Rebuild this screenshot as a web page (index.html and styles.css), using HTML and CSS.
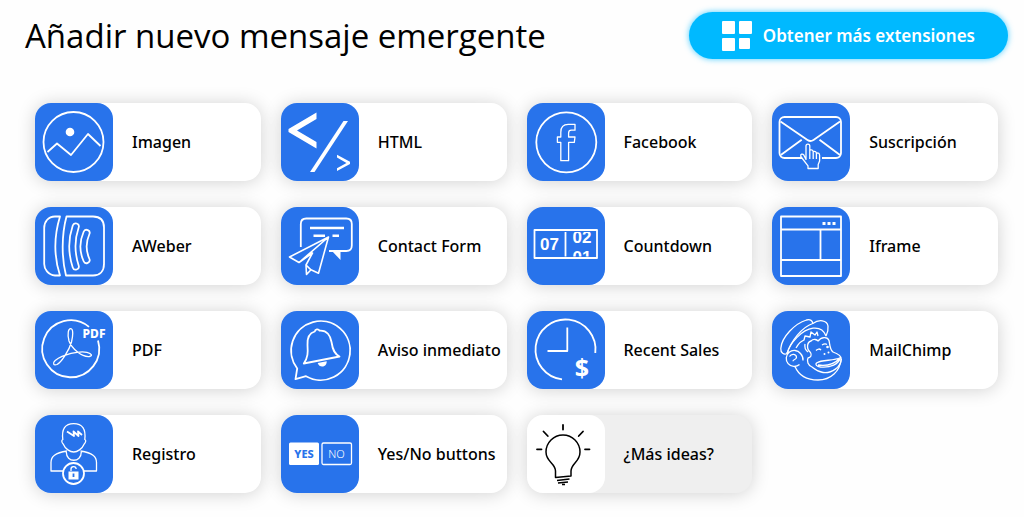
FILE: index.html
```html
<!DOCTYPE html>
<html lang="es">
<head>
  <meta charset="UTF-8">
  <meta name="viewport" content="width=device-width, initial-scale=1.0">
  <title>Añadir nuevo mensaje emergente</title>
  <link rel="stylesheet" href="styles.css">
</head>
<body>
  <header class="header">
    <h1 class="title">Añadir nuevo mensaje emergente</h1>
    <a class="extensions" href="#extensiones">
      <svg class="extensions-icon" viewBox="0 0 30 30" aria-hidden="true">
        <rect x="0" y="0" width="13" height="13" rx="1"/>
        <rect x="17" y="0" width="13" height="13" rx="1"/>
        <rect x="0" y="17" width="13" height="13" rx="1"/>
        <rect x="17" y="17" width="11" height="11" rx="1"/>
      </svg>
      Obtener más extensiones
    </a>
  </header>

  <main class="popup-types">
    <a class="card" href="#imagen">
      <svg class="icon" viewBox="0 0 78 78" aria-hidden="true">
        <circle cx="38.5" cy="39" r="30"/>
        <circle class="solid" cx="35" cy="29" r="4.3"/>
        <path d="M12.5 49 22 40.5 36 52 53 31 65.5 43"/>
      </svg>
      <span class="label">Imagen</span>
    </a>

    <a class="card" href="#html">
      <svg class="icon" viewBox="0 0 78 78" aria-hidden="true">
        <path class="solid" d="M35.5 9.5 7.5 26v3l28 16.5V39L16 27.5 35.5 16z"/>
        <path class="solid" d="M62.5 18H67L33.5 69H29z"/>
        <path class="solid" d="M56 51.8l13 7v2.200l-13 7v-2.800l9.500-5.300-9.500-5.300z"/>
      </svg>
      <span class="label">HTML</span>
    </a>

    <a class="card" href="#facebook">
      <svg class="icon" viewBox="0 0 78 78" aria-hidden="true">
        <circle cx="39.3" cy="39.3" r="30"/>
        <path class="thin" d="M33.8 57.7V39.3h-3.4V34h3.4v-4.8c0-5 2.8-7.9 7.4-7.9H48v5.9h-3.6c-2.2 0-2.8 1-2.8 2.8v4H48l-.7 5.3h-5.7v18.4z"/>
      </svg>
      <span class="label">Facebook</span>
    </a>

    <a class="card" href="#suscripcion">
      <svg class="icon" viewBox="0 0 78 78" aria-hidden="true">
        <rect x="7.5" y="14" width="61.5" height="41" rx="5"/>
        <path d="M8.5 18.5 35.5 37q3 2 6 0l26.5-18.5M29.7 36.7 8.8 52M47.5 36.7 68 52"/>
        <path class="plate" d="M31.5 58V41.5q4-5 8 0V45l8 2.5q2.500 2 2.500 6V58z"/>
        <path class="thin tile" d="M34 56.5V43a1.900 1.900 0 0 1 3.800 0v4q2.800-.8 3.400 1.600 2.600-.6 3.200 1.300 3-.3 3.200 2.300V58l-1.400 3.500v4H36v-2.700L28.800 53.500c-.6-2.600 1.800-3 3-1.500zM37.800 47v9M41.200 48.600V56M44.400 50v6"/>
      </svg>
      <span class="label">Suscripción</span>
    </a>

    <a class="card" href="#aweber">
      <svg class="icon" viewBox="0 0 78 78" aria-hidden="true">
        <path d="M25 9.5C19 29 19 50 25 68.5h-5C13 68 9.200 62 9.200 57V21C9.200 15 13 9.500 20 9.500z"/>
        <path d="M31.5 9.5H58c7 0 11 4 11 11V57c0 7-4 11.500-11 11.500H31C26.500 51 26.500 28 31.500 9.500z"/>
        <path class="pill" d="M40.7 19.5Q34 39 40.700 59.500M51.500 26Q45.500 39.500 51.500 53"/>
        <path class="pill-inner" d="M40.7 19.5Q34 39 40.700 59.500M51.500 26Q45.500 39.500 51.500 53"/>
      </svg>
      <span class="label">AWeber</span>
    </a>

    <a class="card" href="#contact-form">
      <svg class="icon" viewBox="0 0 78 78" aria-hidden="true">
        <path d="M19.8 40V17q0-5.500 5.500-5.500h40q5.500 0 5.500 5.500v21.500q0 5.500-5.500 5.500H48"/>
        <path class="solid" d="M51 44h8.500v9z"/>
        <path class="bar" d="M29 21h34M32.500 28.700H44M51.500 28.700H58"/>
        <path class="plane tile" d="M47.500 30 8.500 50l9.500 5.500L31.500 46 25 58l.5 9.500 4.500-4.700 7.500 3.400zM47.500 30 18 55.500M31.500 46 25 58l5 4.800"/>
      </svg>
      <span class="label">Contact Form</span>
    </a>

    <a class="card" href="#countdown">
      <svg class="icon" viewBox="0 0 78 78" aria-hidden="true">
        <clipPath id="counter">
          <rect x="40" y="25" width="29" height="24.500"/>
        </clipPath>
        <rect x="7.500" y="23" width="62.500" height="28"/>
        <path d="M38.500 25v24.500"/>
        <text class="digits" x="22.500" y="42.500">07</text>
        <g clip-path="url(#counter)">
          <text class="digits" x="55" y="36">02</text>
          <text class="digits" x="55" y="56">01</text>
        </g>
      </svg>
      <span class="label">Countdown</span>
    </a>

    <a class="card" href="#iframe">
      <svg class="icon" viewBox="0 0 78 78" aria-hidden="true">
        <path d="M9 9.500h60v59.500H9zM9 22.500h60M9 53h60M48.500 22.500V53"/>
        <path class="solid" d="M50.500 15h3v3h-3zM55.500 15h3v3h-3zM60.500 15h3v3h-3z"/>
      </svg>
      <span class="label">Iframe</span>
    </a>

    <a class="card" href="#pdf">
      <svg class="icon" viewBox="0 0 78 78" aria-hidden="true">
        <path d="M54 15.900A28.500 28.500 0 1 0 63 29.500"/>
        <path class="thin" d="M34 30c-2-8-.5-12.500 1.800-12.300 2.700.3 2.200 7.300.7 13.300C34 40 26 51.500 22 53.500c-3.500 1.300-4.800-1.300-1.800-4C28 43.500 44 39.500 52 41.300c5 1.200 5.800 3.700 2.300 4.200C47 46.200 37 38 34 30z"/>
        <text class="pdf-text" x="59" y="27">PDF</text>
      </svg>
      <span class="label">PDF</span>
    </a>

    <a class="card" href="#aviso-inmediato">
      <svg class="icon" viewBox="0 0 78 78" aria-hidden="true">
        <path d="M16.200 57.500A29.500 29.500 0 1 1 25 65.200l-10.500 3z"/>
        <path d="M33.800 20.500c.2-2.500 3.700-3 4.700-.8C46 19 49.500 25 50.500 31c1.200 8 3 12 8 14.500L22.800 52.500c4.200-6 4.200-11 3.700-18.500-.5-8 2-12 7.300-13.500z"/>
        <path class="solid" d="M36.700 52l9-1.700c.3 6.200-7.500 7.200-9 1.700z"/>
      </svg>
      <span class="label">Aviso inmediato</span>
    </a>

    <a class="card" href="#recent-sales">
      <svg class="icon" viewBox="0 0 78 78" aria-hidden="true">
        <path d="M68.300 42A30 30 0 1 0 35 68.300M40.300 16.500V40H20.500"/>
        <text class="dollar" x="55" y="66">$</text>
      </svg>
      <span class="label">Recent Sales</span>
    </a>

    <a class="card" href="#mailchimp">
      <svg class="icon" viewBox="0 0 78 78" aria-hidden="true">
        <path class="thin" d="M15 42.500c-3 2-6.500-1-6.200-5C9.500 26 23 12.500 34.500 9c4-1 6 .8 6.300 3.500C30 16 19 30 15 42.500z"/>
        <path class="thin" d="M40.800 12.500C47 8 55 9 56 15c.5 4-.3 6.500-2 10M15 42.500C18 32 30 18.500 41 17.200c6.500-.7 11 2.300 13 7.800"/>
        <path class="thin" d="M28.500 42.500a8 8 0 1 0-1 11M17.500 45.500c2-3.500 7-2.500 7 .8 0 2.700-3.500 1.700-3.500 4M28.500 42.500q3 3.500 2.500 7M15 42.500l1.500-2"/>
        <path class="thin" d="M23 55.500C27 65 36 69 46 69c13 0 22-9 23.300-21"/>
        <path class="thin" d="M24 37c3-5 4-6 8-8l1-4 5 1 1-5 4 3 2-3 1 4M33 33q-1 5 3 8"/>
        <path class="thin" d="M38.500 41.500C34 38 35 31 39 30c2.500-2.500 6-1.500 7 0 3-4 9.500-5 11-.5 1 4 .5 8.500 4 11.500 4 1.500 8.500 3.500 8.200 7C69 56 60 62.500 51 61.500c-6-.7-8-3-11-5.500-4-1.500-5.500-6-4-9 3-.5 4-3 2.500-5.500z"/>
        <path class="thin" d="M44.500 52c6-4 17-1.500 24-5.500-1.500 6.500-10 10.500-20 9.500-4-.5-5.500-2.500-4-4zM46 54c8 1 16-.5 21-6M44 39.500q3-2.800 5-.3M50 34q3-2 5-.5"/>
        <circle class="solid" cx="55.5" cy="36" r="1.300"/>
        <circle class="solid" cx="52.500" cy="43" r="1"/>
        <circle class="solid" cx="56.500" cy="41.500" r="1"/>
      </svg>
      <span class="label">MailChimp</span>
    </a>

    <a class="card" href="#registro">
      <svg class="icon" viewBox="0 0 78 78" aria-hidden="true">
        <path class="thin" d="M27.800 24.500C26.500 14 30 8.700 38.700 8.700S51 14 49.800 24.500c1.600.6.900 3.200-.6 4.500-2 5-7 8-10.500 8s-8.500-3-10.500-8c-1.500-1.300-2-3.900-.4-4.500z"/>
        <path d="M32 16.500l7 4.500-.5-4.500 5 4.500-.5-4.500 4 3.500"/>
        <path class="thin" d="M28.500 56H16v-8.500c0-6 4-9.500 16-11.500M49 56h12.500v-8.500c0-6-4-9.500-16-11.500M31.300 37c0 11 15 11 15 0"/>
        <circle class="tile" cx="38.500" cy="58.500" r="10.500"/>
        <path class="solid" d="M33.500 56.500h10v8h-10z"/>
        <path class="thin" d="M36 56v-1.500a2.600 2.600 0 0 1 5.200-.5"/>
        <path class="keyhole" d="M38.500 58.500v3.500"/>
      </svg>
      <span class="label">Registro</span>
    </a>

    <a class="card" href="#yes-no">
      <svg class="icon" viewBox="0 0 78 78" aria-hidden="true">
        <rect class="solid" x="8" y="27.500" width="30" height="22.500" rx="1.500"/>
        <rect class="thin" x="41" y="28" width="29.500" height="21.500" rx="1.500"/>
        <text class="yes-text" x="23" y="43">YES</text>
        <text class="no-text" x="55.500" y="43">NO</text>
      </svg>
      <span class="label">Yes/No buttons</span>
    </a>

    <a class="card ideas" href="#ideas">
      <svg class="icon" viewBox="0 0 78 78" aria-hidden="true">
        <path d="M28.500 62.500V56c0-8-9.500-9-9.500-19a17 17 0 0 1 34 0c0 10-8.500 11-9 19v5zM30 65.500l12.500-1.500M31 68l10-1M35 69.500h3"/>
        <path class="ray" d="M36 10v4.500M16.500 16.500l4.300 4.500M56 16.500 51.700 21M10 34.300h4.500M58 34.300h4.500"/>
      </svg>
      <span class="label">¿Más ideas?</span>
    </a>
  </main>
</body>
</html>
```
FILE: styles.css
```css
* {
  margin: 0;
  padding: 0;
  box-sizing: border-box;
}

body {
  font-family: "Noto Sans", "Open Sans", sans-serif;
  background-color: #fefefe;
  color: #000;
}

a {
  color: inherit;
  text-decoration: none;
}

.header {
  display: flex;
  justify-content: space-between;
  align-items: center;
  padding: 12px 16px 0 25px;
}

.title {
  font-family: "Open Sans", sans-serif;
  font-size: 33px;
  font-weight: 400;
  line-height: 47px;
}

.extensions {
  display: flex;
  align-items: center;
  gap: 11px;
  height: 47px;
  padding: 0 33px;
  border-radius: 24px;
  background-color: #00b9ff;
  box-shadow: 0 0 6px rgba(0, 185, 255, 0.7);
  color: #fff;
  font-size: 17px;
  font-weight: 600;
}

.extensions-icon {
  width: 30px;
  height: 30px;
  fill: #fff;
}

.popup-types {
  display: grid;
  grid-template-columns: repeat(4, 1fr);
  gap: 26px 20px;
  padding: 44px 26px 22px 35px;
}

.card {
  display: flex;
  align-items: center;
  gap: 19px;
  border-radius: 16px;
  background-color: #fff;
  box-shadow: 0 1px 18px rgba(0, 0, 0, 0.18);
}

.label {
  font-size: 16px;
  font-weight: 500;
  white-space: nowrap;
}

.icon {
  flex: none;
  width: 78px;
  height: 78px;
  border-radius: 16px;
  background-color: #2873eb;
  fill: none;
  stroke: #fff;
  stroke-width: 1.8;
  stroke-linejoin: round;
}

.icon .thin {
  stroke-width: 1.3;
}

.icon .plane {
  stroke-width: 1.6;
}

.icon .solid {
  fill: #fff;
  stroke: none;
}

.icon .tile {
  fill: #2873eb;
}

.icon .plate {
  fill: #2873eb;
  stroke: none;
}

.icon .bar {
  stroke-width: 2.5;
}

.icon .pill {
  stroke-width: 8;
  stroke-linecap: round;
}

.icon .pill-inner {
  stroke: #2873eb;
  stroke-width: 4.5;
  stroke-linecap: round;
}

.icon .keyhole {
  stroke: #2873eb;
}

.icon text {
  fill: #fff;
  stroke: none;
  text-anchor: middle;
}

.icon .digits {
  font-family: "Liberation Sans", Arial, sans-serif;
  font-size: 17px;
  font-weight: 700;
}

.icon .pdf-text {
  font-size: 12px;
  font-weight: 800;
}

.icon .dollar {
  font-size: 25px;
  font-weight: 700;
}

.icon .yes-text {
  fill: #2873eb;
  font-size: 11px;
  font-weight: 800;
}

.icon .no-text {
  font-size: 11px;
  font-weight: 300;
}

.ideas {
  background-color: #efefef;
}

.ideas .icon {
  background-color: #fff;
  stroke: #000;
  stroke-width: 1.5;
}

.ideas .ray {
  stroke-width: 1.8;
  stroke-linecap: round;
}
```
